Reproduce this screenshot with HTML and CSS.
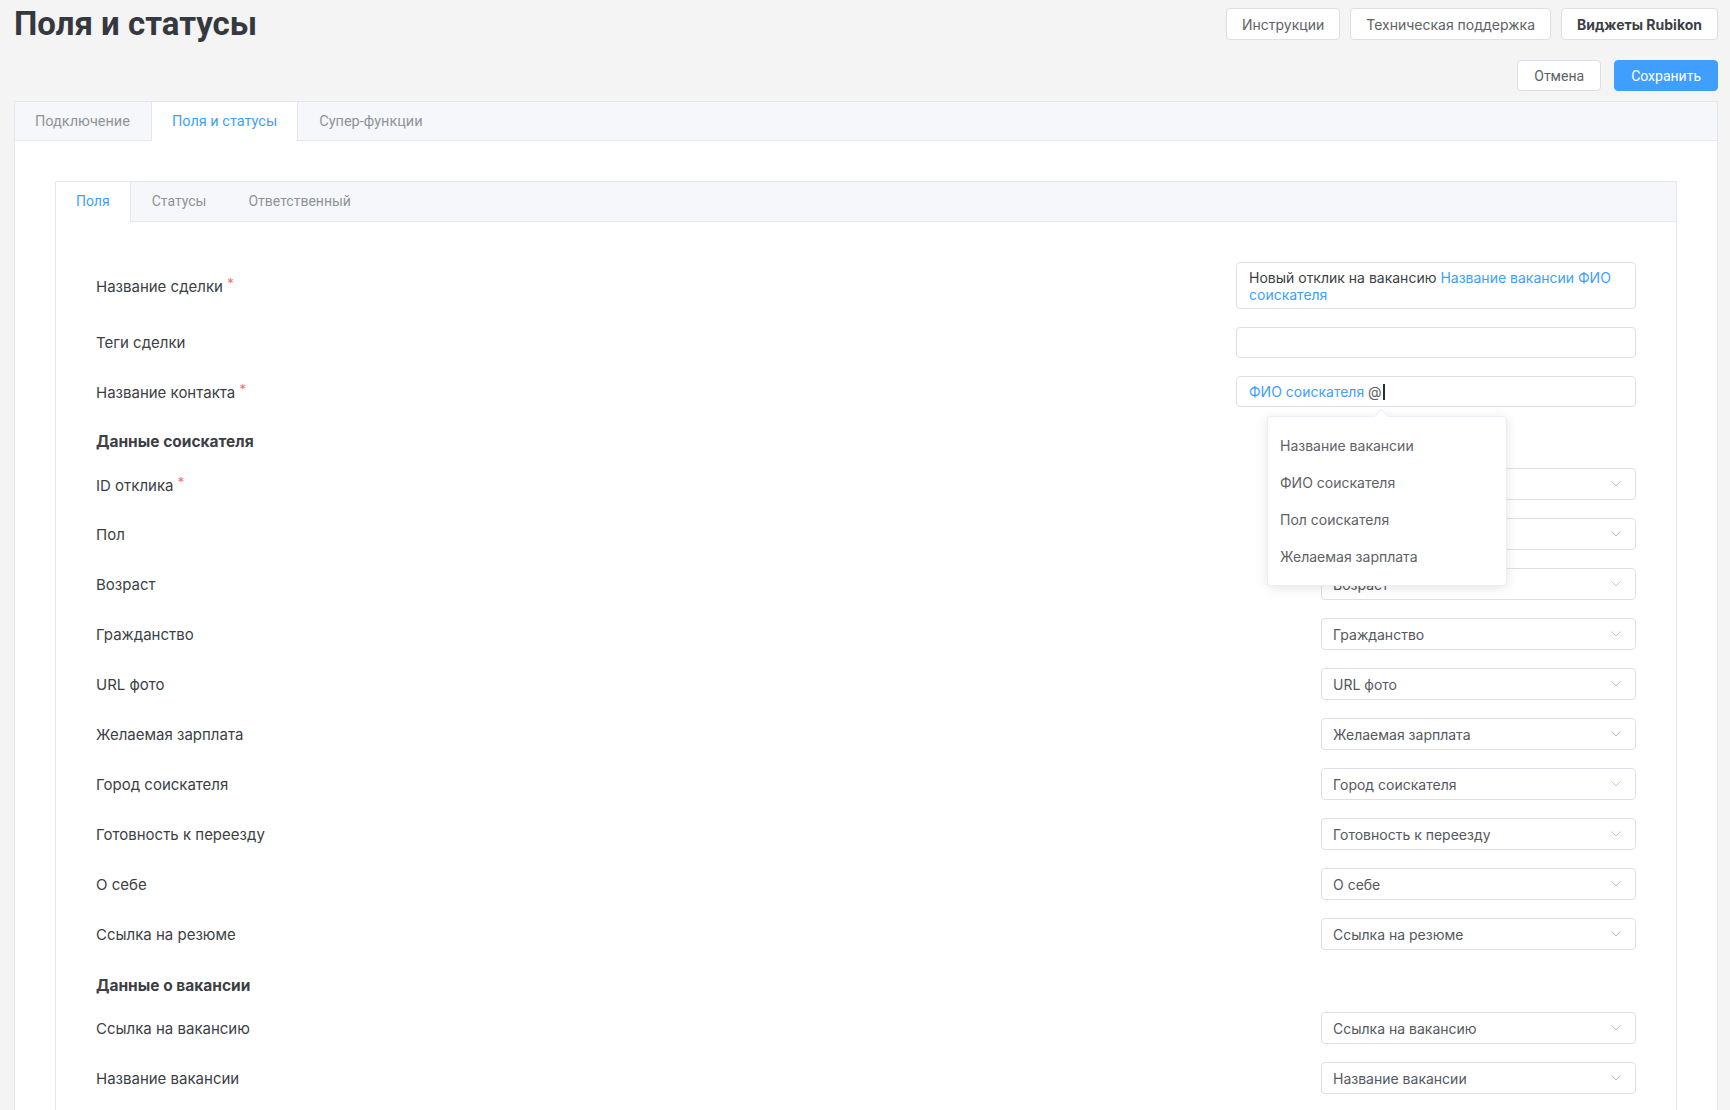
FILE: index.html
```html
<!DOCTYPE html>
<html lang="ru">

<head>
    <meta charset="UTF-8">
    <meta name="viewport" content="width=device-width, initial-scale=1.0">
    <title>Поля и статусы</title>
    <link rel="stylesheet" href="styles.css">
</head>

<body>
    <div class="page">
        <header class="top">
            <h1>Поля и статусы</h1>
            <div class="help-buttons">
                <button class="btn">Инструкции</button>
                <button class="btn">Техническая поддержка</button>
                <button class="btn btn-bold">Виджеты Rubikon</button>
            </div>
        </header>

        <div class="save-row">
            <button class="btn btn-form">Отмена</button>
            <button class="btn btn-form btn-primary">Сохранить</button>
        </div>

        <section class="panel">
            <nav class="tabs">
                <div class="tab">Подключение</div>
                <div class="tab active">Поля и статусы</div>
                <div class="tab">Супер-функции</div>
            </nav>

            <div class="panel-body">
                <div class="inner-panel">
                    <nav class="tabs inner-tabs">
                        <div class="tab active">Поля</div>
                        <div class="tab">Статусы</div>
                        <div class="tab">Ответственный</div>
                    </nav>

                    <div class="fields">
                        <!-- Сделка -->
                        <div class="row row-input">
                            <label>Название сделки <span class="req">*</span></label>
                            <div class="text-input multiline">
                                Новый отклик на вакансию <span class="var">Название вакансии ФИО соискателя</span>
                            </div>
                        </div>

                        <div class="row row-input">
                            <label>Теги сделки</label>
                            <div class="text-input"></div>
                        </div>

                        <div class="row row-input">
                            <label>Название контакта <span class="req">*</span></label>
                            <div class="text-input mention-wrap">
                                <span class="var">ФИО соискателя</span> @<span class="caret-line"></span>

                                <!-- подсказка переменных по @ -->
                                <ul class="mention-menu">
                                    <li>Название вакансии</li>
                                    <li>ФИО соискателя</li>
                                    <li>Пол соискателя</li>
                                    <li>Желаемая зарплата</li>
                                </ul>
                            </div>
                        </div>

                        <!-- Соискатель -->
                        <h3 class="group-title">Данные соискателя</h3>

                        <div class="row">
                            <label>ID отклика <span class="req">*</span></label>
                            <div class="select">ID отклика</div>
                        </div>
                        <div class="row">
                            <label>Пол</label>
                            <div class="select">Пол</div>
                        </div>
                        <div class="row">
                            <label>Возраст</label>
                            <div class="select">Возраст</div>
                        </div>
                        <div class="row">
                            <label>Гражданство</label>
                            <div class="select">Гражданство</div>
                        </div>
                        <div class="row">
                            <label>URL фото</label>
                            <div class="select">URL фото</div>
                        </div>
                        <div class="row">
                            <label>Желаемая зарплата</label>
                            <div class="select">Желаемая зарплата</div>
                        </div>
                        <div class="row">
                            <label>Город соискателя</label>
                            <div class="select">Город соискателя</div>
                        </div>
                        <div class="row">
                            <label>Готовность к переезду</label>
                            <div class="select">Готовность к переезду</div>
                        </div>
                        <div class="row">
                            <label>О себе</label>
                            <div class="select">О себе</div>
                        </div>
                        <div class="row">
                            <label>Ссылка на резюме</label>
                            <div class="select">Ссылка на резюме</div>
                        </div>

                        <!-- Вакансия -->
                        <h3 class="group-title">Данные о вакансии</h3>

                        <div class="row">
                            <label>Ссылка на вакансию</label>
                            <div class="select">Ссылка на вакансию</div>
                        </div>
                        <div class="row">
                            <label>Название вакансии</label>
                            <div class="select">Название вакансии</div>
                        </div>
                    </div>
                </div>
            </div>
        </section>
    </div>

    <script>
        // стрелка у каждого селекта
        const chevron = '<svg class="chevron" width="10" height="6" viewBox="0 0 10 6"><path d="M0.5 0.5 L5 5 L9.5 0.5" fill="none" stroke="#c0c4cc" stroke-width="1"/></svg>';
        document.querySelectorAll('.select').forEach(el => {
            el.insertAdjacentHTML('beforeend', chevron);
        });
    </script>
</body>

</html>
```

FILE: styles.css
```css
body {
    margin: 0;
    padding: 0;
    background-color: #f4f4f4;
    font-family: Inter, "Noto Sans", sans-serif;
    color: #3c3f45;
}

.page {
    padding: 8px 12px 0 14px;
}

.top {
    display: flex;
    justify-content: space-between;
    align-items: flex-start;
}

.top h1 {
    margin: 0;
    font-family: Roboto, sans-serif;
    font-size: 33px;
    line-height: 32px;
    font-weight: 700;
    color: #35383e;
}

.help-buttons {
    display: flex;
    gap: 10px;
}

.btn {
    height: 32px;
    padding: 0 15px;
    background-color: white;
    border: 1px solid #dcdfe6;
    border-radius: 4px;
    font-family: Inter, sans-serif;
    font-size: 14px;
    color: #606266;
    cursor: pointer;
}

.btn-bold {
    font-weight: 700;
    color: #3c3f45;
}

.save-row {
    display: flex;
    justify-content: flex-end;
    gap: 13px;
    margin-top: 20px;
}

.btn-form {
    height: 31px;
    padding: 0 16px;
    font-family: Roboto, sans-serif;
    font-size: 14px;
}

.btn-primary {
    background-color: #409eff;
    border-color: #409eff;
    color: white;
}

/* основная карточка с вкладками */
.panel {
    margin-top: 10px;
    background-color: white;
    border: 1px solid #e4e7ed;
}

.tabs {
    display: flex;
    height: 38px;
    background-color: #f5f7fa;
    border-bottom: 1px solid #e4e7ed;
}

.tab {
    padding: 0 20px;
    line-height: 40px;
    font-family: Roboto, sans-serif;
    font-size: 14.5px;
    color: #909399;
    border-right: 1px solid transparent;
    border-left: 1px solid transparent;
}

.tab:first-child {
    border-left: none;
}

.tab.active {
    background-color: white;
    color: #409eff;
    height: 39px;
    border-left-color: #e4e7ed;
    border-right-color: #e4e7ed;
}

.tab.active:first-child {
    border-left: none;
}

.panel-body {
    padding: 40px;
}

.inner-panel {
    border: 1px solid #e4e7ed;
    padding-bottom: 40px;
}

.inner-tabs {
    height: 39px;
}

.inner-tabs .tab {
    line-height: 39px;
    font-size: 14px;
}

.inner-tabs .tab.active {
    height: 40px;
}

.fields {
    display: flex;
    flex-direction: column;
    padding: 40px 40px 0;
}

.row {
    display: flex;
    justify-content: space-between;
    align-items: center;
    margin-bottom: 18px;
}

.row label {
    font-size: 15px;
    color: #3c3f45;
}

.req {
    color: #f56c6c;
    font-size: 13px;
    vertical-align: 4px;
    margin-left: 0;
}

.text-input {
    box-sizing: border-box;
    width: 400px;
    min-height: 31px;
    padding: 6px 12px 5px;
    border: 1px solid #dcdfe6;
    border-radius: 4px;
    font-size: 14px;
    line-height: 18px;
    color: #3c3f45;
}

.text-input.multiline {
    line-height: 17px;
}

.var {
    color: #409eff;
}

.mention-wrap {
    position: relative;
    color: #606266;
}

.caret-line {
    display: inline-block;
    width: 2px;
    height: 16px;
    margin-left: 1px;
    vertical-align: -3px;
    background-color: #2a2d33;
}

.mention-menu {
    position: absolute;
    top: 39px;
    left: 30px;
    width: 238px;
    margin: 0;
    padding: 10px 0;
    list-style: none;
    background-color: white;
    border: 1px solid #ebeef5;
    border-radius: 4px;
    box-shadow: 0 2px 12px rgba(0, 0, 0, 0.1);
    z-index: 10;
}

.mention-menu::before {
    content: "";
    position: absolute;
    top: -6px;
    left: 108px;
    width: 10px;
    height: 10px;
    background-color: white;
    border-left: 1px solid #ebeef5;
    border-top: 1px solid #ebeef5;
    transform: rotate(45deg);
}

.mention-menu li {
    height: 37px;
    line-height: 37px;
    padding-left: 12px;
    font-size: 14px;
    color: #606266;
}

.group-title {
    margin: 0 0 16px;
    padding-top: 7px;
    font-size: 15.5px;
    line-height: 20px;
    font-weight: 700;
    color: #3c3f45;
}

.group-title ~ .group-title {
    padding-top: 8px;
}

.select {
    box-sizing: border-box;
    width: 315px;
    height: 32px;
    padding: 0 14px 0 11px;
    border: 1px solid #dcdfe6;
    border-radius: 4px;
    display: flex;
    justify-content: space-between;
    align-items: center;
    font-size: 14px;
    color: #55585e;
}
```
